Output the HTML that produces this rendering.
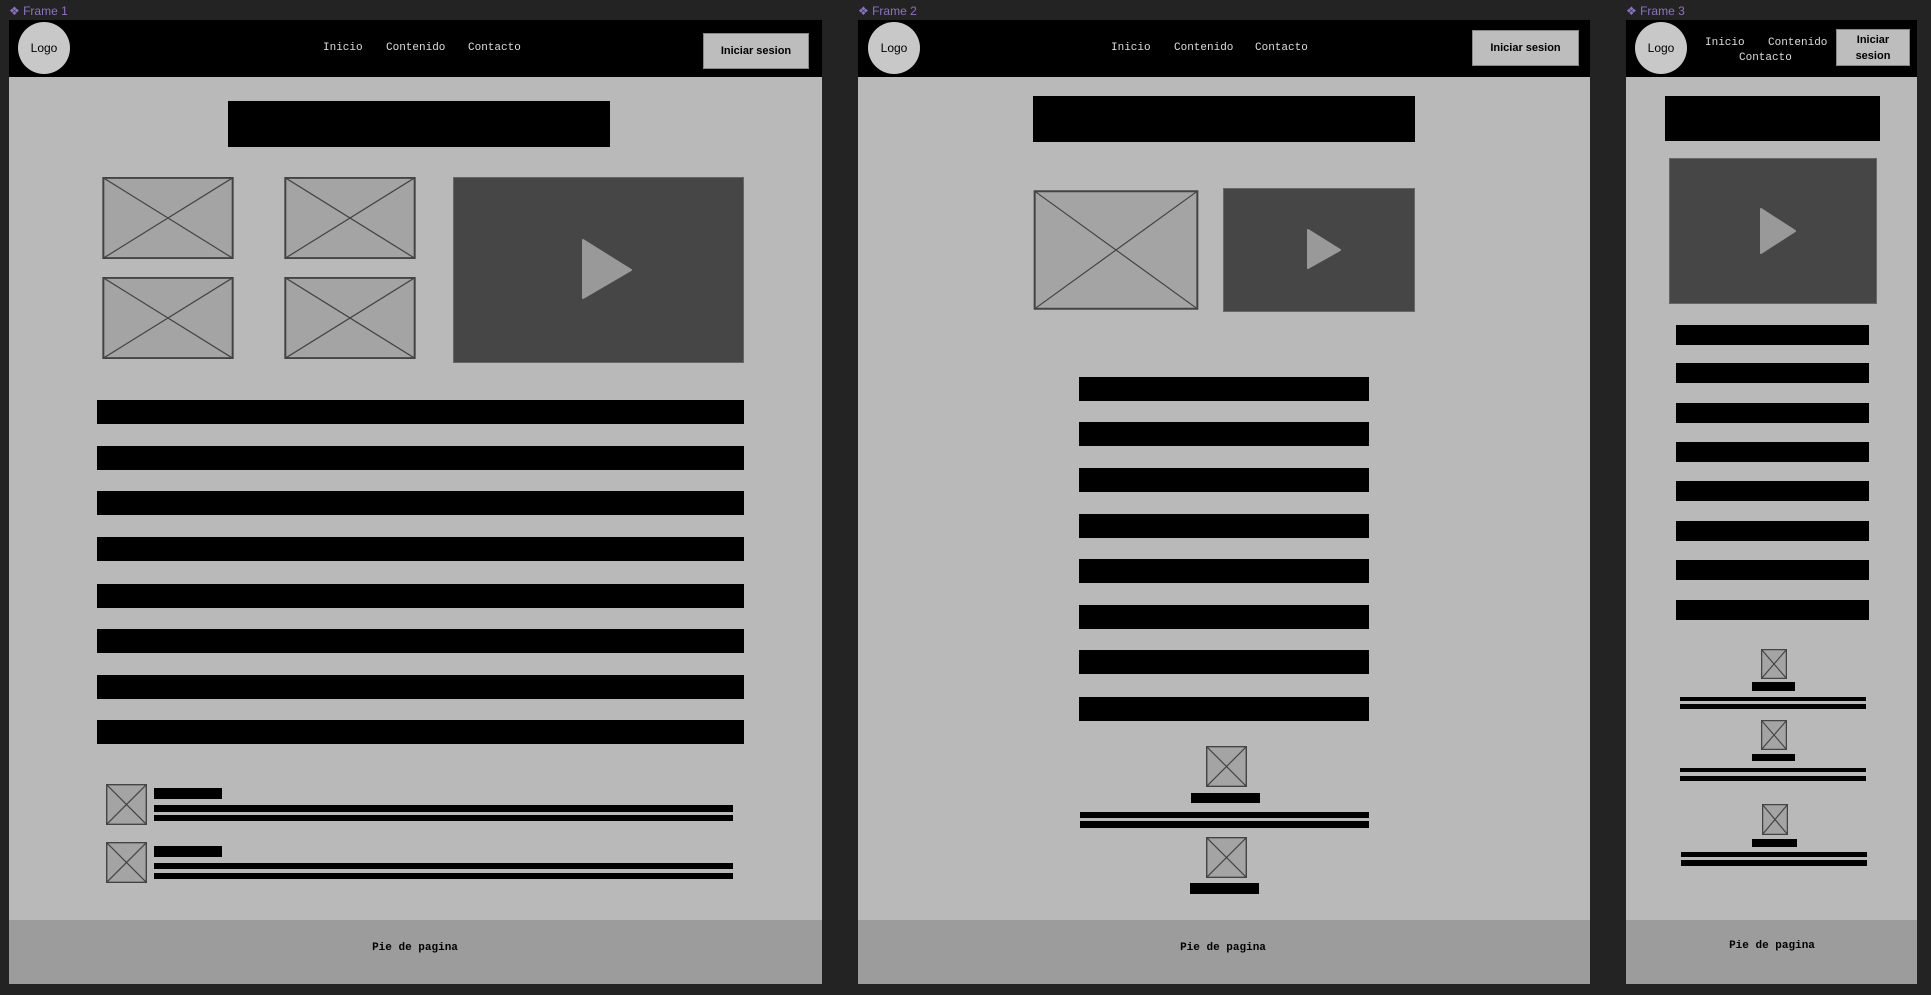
<!DOCTYPE html>
<html><head><meta charset="utf-8"><style>
*{margin:0;padding:0;box-sizing:border-box}
body{width:1931px;height:995px;background:#232323;position:relative;overflow:hidden;font-family:"Liberation Sans",sans-serif}
div,svg,span{position:absolute}
.lbl{color:#8d72c4;font-size:12px;top:4px}
.frame{background:#b9b9b9;top:20px;height:964px}
.hdr{background:#000;left:0;right:0;top:0;height:57px}
.logo{background:#c8c8c8;border-radius:50%;width:52px;height:52px;top:22px;font-size:12px;display:flex;align-items:center;justify-content:center;color:#000}
.nav{color:#ddd;font-family:"Liberation Mono",monospace;font-size:11px;white-space:nowrap}
.btn{background:#bdbdbd;font-weight:bold;font-size:11px;display:flex;align-items:center;justify-content:center;text-align:center;color:#000;border:1px solid #888;line-height:16px}
.b{background:#000}
.foot{background:#9c9c9c;top:920px;height:64px}
.ft{font-family:"Liberation Mono",monospace;font-weight:bold;font-size:11px;color:#000;transform:translate(-50%,-50%)}
.vid{background:#464646;border:1px solid #666}
</style></head><body>
<svg width="0" height="0"><defs><symbol id="x" viewBox="0 0 100 100" preserveAspectRatio="none"><rect x="1" y="1" width="98" height="98" fill="#a4a4a4" stroke="#444" stroke-width="2" vector-effect="non-scaling-stroke"/><path d="M1 1L99 99M99 1L1 99" stroke="#444" stroke-width="1.2" vector-effect="non-scaling-stroke"/></symbol></defs></svg>

<span class="lbl" style="left:9px">❖ Frame 1</span>
<span class="lbl" style="left:858px">❖ Frame 2</span>
<span class="lbl" style="left:1626px">❖ Frame 3</span>

<!-- Frame 1 -->
<div class="frame" style="left:9px;width:813px"></div>
<div class="hdr" style="left:9px;width:813px;top:20px;right:auto"></div>
<div class="logo" style="left:18px">Logo</div>
<span class="nav" style="left:323px;top:42px">Inicio</span>
<span class="nav" style="left:386px;top:42px">Contenido</span>
<span class="nav" style="left:468px;top:42px">Contacto</span>
<div class="btn" style="left:703px;top:33px;width:106px;height:36px">Iniciar sesion</div>
<div class="b" style="left:228px;top:101px;width:382px;height:46px"></div>
<svg style="left:102px;top:177px" width="132" height="82"><use href="#x"/></svg>
<svg style="left:284px;top:177px" width="132" height="82"><use href="#x"/></svg>
<svg style="left:102px;top:277px" width="132" height="82"><use href="#x"/></svg>
<svg style="left:284px;top:277px" width="132" height="82"><use href="#x"/></svg>
<div class="vid" style="left:453px;top:177px;width:291px;height:186px"></div>
<div class="b" style="left:97px;top:400px;width:647px;height:24px"></div>
<div class="b" style="left:97px;top:446px;width:647px;height:24px"></div>
<div class="b" style="left:97px;top:491px;width:647px;height:24px"></div>
<div class="b" style="left:97px;top:537px;width:647px;height:24px"></div>
<div class="b" style="left:97px;top:584px;width:647px;height:24px"></div>
<div class="b" style="left:97px;top:629px;width:647px;height:24px"></div>
<div class="b" style="left:97px;top:675px;width:647px;height:24px"></div>
<div class="b" style="left:97px;top:720px;width:647px;height:24px"></div>
<svg style="left:106px;top:784px" width="41" height="41"><use href="#x"/></svg>
<div class="b" style="left:154px;top:788px;width:68px;height:11px"></div>
<div class="b" style="left:154px;top:805px;width:579px;height:7px"></div>
<div class="b" style="left:154px;top:815px;width:579px;height:6px"></div>
<svg style="left:106px;top:842px" width="41" height="41"><use href="#x"/></svg>
<div class="b" style="left:154px;top:846px;width:68px;height:11px"></div>
<div class="b" style="left:154px;top:863px;width:579px;height:6px"></div>
<div class="b" style="left:154px;top:873px;width:579px;height:6px"></div>
<div class="foot" style="left:9px;width:813px"></div>
<span class="ft" style="left:415px;top:948px">Pie de pagina</span>

<!-- Frame 2 -->
<div class="frame" style="left:858px;width:732px"></div>
<div class="hdr" style="left:858px;width:732px;top:20px;right:auto"></div>
<div class="logo" style="left:868px">Logo</div>
<span class="nav" style="left:1111px;top:42px">Inicio</span>
<span class="nav" style="left:1174px;top:42px">Contenido</span>
<span class="nav" style="left:1255px;top:42px">Contacto</span>
<div class="btn" style="left:1472px;top:30px;width:107px;height:36px">Iniciar sesion</div>
<div class="b" style="left:1033px;top:96px;width:382px;height:46px"></div>
<svg style="left:1033px;top:190px" width="166" height="120"><use href="#x"/></svg>
<div class="vid" style="left:1223px;top:188px;width:192px;height:124px"></div>
<div class="b" style="left:1079px;top:377px;width:290px;height:24px"></div>
<div class="b" style="left:1079px;top:422px;width:290px;height:24px"></div>
<div class="b" style="left:1079px;top:468px;width:290px;height:24px"></div>
<div class="b" style="left:1079px;top:514px;width:290px;height:24px"></div>
<div class="b" style="left:1079px;top:559px;width:290px;height:24px"></div>
<div class="b" style="left:1079px;top:605px;width:290px;height:24px"></div>
<div class="b" style="left:1079px;top:650px;width:290px;height:24px"></div>
<div class="b" style="left:1079px;top:697px;width:290px;height:24px"></div>
<svg style="left:1206px;top:746px" width="41" height="41"><use href="#x"/></svg>
<div class="b" style="left:1191px;top:793px;width:69px;height:10px"></div>
<div class="b" style="left:1080px;top:812px;width:289px;height:6px"></div>
<div class="b" style="left:1080px;top:821px;width:289px;height:7px"></div>
<svg style="left:1206px;top:837px" width="41" height="41"><use href="#x"/></svg>
<div class="b" style="left:1190px;top:883px;width:69px;height:11px"></div>
<div class="foot" style="left:858px;width:732px"></div>
<span class="ft" style="left:1223px;top:948px">Pie de pagina</span>

<!-- Frame 3 -->
<div class="frame" style="left:1626px;width:291px"></div>
<div class="hdr" style="left:1626px;width:291px;top:20px;right:auto"></div>
<div class="logo" style="left:1635px">Logo</div>
<span class="nav" style="left:1705px;top:37px">Inicio</span>
<span class="nav" style="left:1768px;top:37px">Contenido</span>
<span class="nav" style="left:1739px;top:52px">Contacto</span>
<div class="btn" style="left:1836px;top:29px;width:74px;height:37px">Iniciar<br>sesion</div>
<div class="b" style="left:1665px;top:96px;width:215px;height:45px"></div>
<div class="vid" style="left:1669px;top:158px;width:208px;height:146px"></div>
<div class="b" style="left:1676px;top:325px;width:193px;height:20px"></div>
<div class="b" style="left:1676px;top:363px;width:193px;height:20px"></div>
<div class="b" style="left:1676px;top:403px;width:193px;height:20px"></div>
<div class="b" style="left:1676px;top:442px;width:193px;height:20px"></div>
<div class="b" style="left:1676px;top:481px;width:193px;height:20px"></div>
<div class="b" style="left:1676px;top:521px;width:193px;height:20px"></div>
<div class="b" style="left:1676px;top:560px;width:193px;height:20px"></div>
<div class="b" style="left:1676px;top:600px;width:193px;height:20px"></div>
<svg style="left:1761px;top:649px" width="26" height="30"><use href="#x"/></svg>
<div class="b" style="left:1752px;top:682px;width:43px;height:9px"></div>
<div class="b" style="left:1680px;top:697px;width:186px;height:4px"></div>
<div class="b" style="left:1680px;top:704px;width:186px;height:5px"></div>
<svg style="left:1761px;top:720px" width="26" height="30"><use href="#x"/></svg>
<div class="b" style="left:1752px;top:754px;width:43px;height:7px"></div>
<div class="b" style="left:1680px;top:768px;width:186px;height:4px"></div>
<div class="b" style="left:1680px;top:776px;width:186px;height:5px"></div>
<svg style="left:1762px;top:804px" width="26" height="31"><use href="#x"/></svg>
<div class="b" style="left:1752px;top:839px;width:45px;height:8px"></div>
<div class="b" style="left:1681px;top:852px;width:186px;height:5px"></div>
<div class="b" style="left:1681px;top:860px;width:186px;height:6px"></div>
<div class="foot" style="left:1626px;width:291px"></div>
<span class="ft" style="left:1772px;top:946px">Pie de pagina</span>

<svg style="left:0;top:0" width="1931" height="995">
<path d="M583 240L631 270L583 298Z" fill="#999" stroke="#999" stroke-linejoin="round" stroke-width="2"/>
<path d="M1308 230L1340 250L1308 268Z" fill="#999" stroke="#999" stroke-linejoin="round" stroke-width="2"/>
<path d="M1761 209L1795 231L1761 253Z" fill="#999" stroke="#999" stroke-linejoin="round" stroke-width="2"/>
</svg>
</body></html>
